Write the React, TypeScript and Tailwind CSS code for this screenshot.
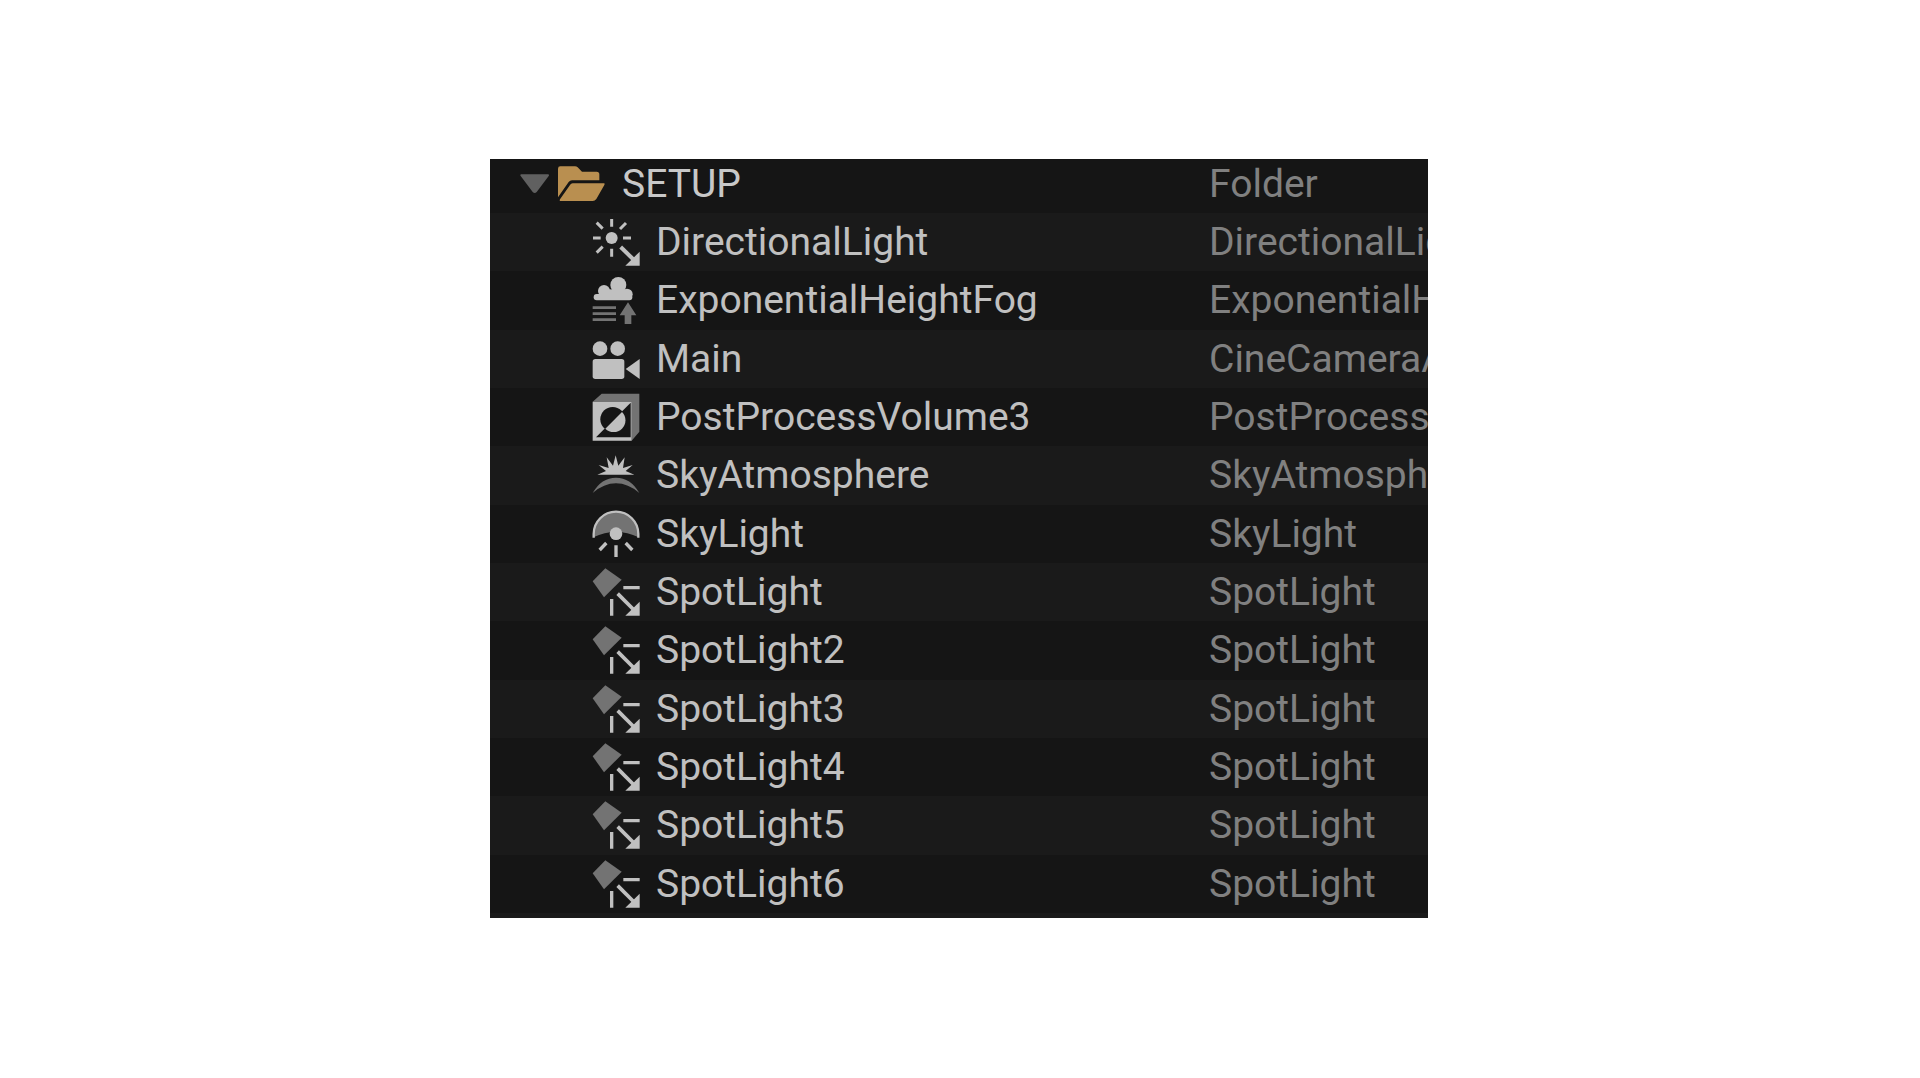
import { useState, type ReactNode } from "react";

const LIGHT = "#c0c0c0";
const DIM = "#737373";

function Icon({ children }: { children: ReactNode }) {
    return (
        <svg viewBox="0 0 144 144" className="size-12 shrink-0" fill={LIGHT} aria-hidden="true">
            {children}
        </svg>
    );
}

function DirectionalLightIcon() {
    return (
        <Icon>
            <circle cx="59" cy="60" r="18" />
            <path
                d="M59 3V26M59 92V116M3 60H26M93 60H117M14 14L32 32M102 15L84 33M14 104L32 86"
                stroke={LIGHT}
                strokeWidth="9"
            />
            <path d="M86 87L126 126" stroke={LIGHT} strokeWidth="12" />
            <path d="M143 101V143H100Z" />
        </Icon>
    );
}

function FogIcon() {
    return (
        <Icon>
            <circle cx="79" cy="27" r="24" />
            <circle cx="36" cy="45" r="18" />
            <circle cx="105" cy="55" r="17" />
            <rect x="5" y="54" width="116" height="19" rx="9" />
            <path d="M30 40H100V70H30Z" />
            <path d="M2 95H72M2 113H72M2 131H72" stroke={DIM} strokeWidth="8" />
            <path d="M108 79L133 118H118V144H98V118H83Z" fill={DIM} />
        </Icon>
    );
}

function CameraIcon() {
    return (
        <Icon>
            <circle cx="24" cy="41" r="22" />
            <circle cx="77" cy="41" r="22" />
            <rect x="2" y="72" width="95" height="60" rx="8" />
            <path d="M101 102L143 72V132Z" />
        </Icon>
    );
}

function PostProcessIcon() {
    return (
        <Icon>
            <path d="M2 26L29 2H142V116L119 143V26Z" fill={DIM} />
            <path d="M2 26H119V143H2Z" />
            <path d="M116 29V133H12Z" fill="#151515" />
            <circle cx="62" cy="79" r="37" fill="#151515" />
            <path d="M90 57A35 35 0 0 1 40 107Z" />
        </Icon>
    );
}

function SkyAtmosphereIcon() {
    return (
        <Icon>
            <path d="M16 71L42 60L20 42L50 51L44 19L63 44L71 13L79 44L98 19L93 51L122 42L101 60L127 71Z" />
            <path d="M2 126Q28 80 72 80Q116 80 142 126Q108 97 72 97Q36 97 2 126Z" fill={DIM} />
        </Icon>
    );
}

function SkyLightIcon() {
    return (
        <Icon>
            <path d="M4 82V72A68 67 0 0 1 140 72V82Q72 50 4 82Z" fill={DIM} />
            <path d="M5 83V72A67 67 0 0 1 139 72V83" fill="none" stroke={LIGHT} strokeWidth="7" />
            <circle cx="72" cy="71" r="19" />
            <path d="M72 106V141M43 99L23 120M101 99L121 120" stroke={LIGHT} strokeWidth="10" />
        </Icon>
    );
}

function SpotLightIcon() {
    return (
        <Icon>
            <path d="M40 1L89 35L36 88L2 40Z" fill={DIM} />
            <path d="M94 59H143M59 93V143" stroke={LIGHT} strokeWidth="10" />
            <path d="M77 77L126 126" stroke={LIGHT} strokeWidth="11" />
            <path d="M143 101V143H100Z" />
        </Icon>
    );
}

function FolderIcon() {
    return (
        <svg viewBox="0 0 144 108" className="h-9 w-12 shrink-0" fill="#b98f50" aria-hidden="true">
            <path d="M0 94V8Q0 1 7 1H51Q56 1 59 4L72 17H116Q124 17 124 25V43H42Q36 43 32 48Z" />
            <path d="M44 52H138Q142 52 139 57L115 99Q111 105 104 105H7Q3 105 6 100L36 57Q39 52 44 52Z" />
        </svg>
    );
}

const actors = [
    { name: "DirectionalLight", type: "DirectionalLight", icon: DirectionalLightIcon },
    { name: "ExponentialHeightFog", type: "ExponentialHeightFog", icon: FogIcon },
    { name: "Main", type: "CineCameraActor", icon: CameraIcon },
    { name: "PostProcessVolume3", type: "PostProcessVolume", icon: PostProcessIcon },
    { name: "SkyAtmosphere", type: "SkyAtmosphere", icon: SkyAtmosphereIcon },
    { name: "SkyLight", type: "SkyLight", icon: SkyLightIcon },
    { name: "SpotLight", type: "SpotLight", icon: SpotLightIcon },
    { name: "SpotLight2", type: "SpotLight", icon: SpotLightIcon },
    { name: "SpotLight3", type: "SpotLight", icon: SpotLightIcon },
    { name: "SpotLight4", type: "SpotLight", icon: SpotLightIcon },
    { name: "SpotLight5", type: "SpotLight", icon: SpotLightIcon },
    { name: "SpotLight6", type: "SpotLight", icon: SpotLightIcon },
];

export default function App() {
    const [open, setOpen] = useState(true);

    return (
        <main className="flex min-h-screen items-center justify-center bg-white pr-0.5 pb-0.5">
            <div className="w-full max-w-[938px] overflow-hidden bg-[#1a1a1a] pb-[5px] font-[Roboto,sans-serif] text-[39px] leading-[44px]">
                <table className="w-full table-fixed border-collapse whitespace-nowrap">
                    <colgroup>
                        <col />
                        <col className="w-[219px]" />
                    </colgroup>
                    <tbody>
                        {/* Folder row */}
                        <tr className="h-[54px] bg-[#151515] text-[#c8c8c8]">
                            <td className="p-0 pb-1 pl-[30px]">
                                <div className="flex items-center">
                                    <button
                                        type="button"
                                        aria-label="SETUP"
                                        aria-expanded={open}
                                        onClick={() => setOpen(!open)}
                                        className="mr-2 flex h-9 w-[30px] items-center"
                                    >
                                        <svg viewBox="0 0 90 60" className={open ? "h-5 w-[30px]" : "h-5 w-[30px] -rotate-90"}>
                                            <path d="M4 1H84Q89 1 86 6L50 54Q44 60 38 54L2 6Q-1 1 4 1Z" fill="#606060" />
                                        </svg>
                                    </button>
                                    <FolderIcon />
                                    <span className="ml-4">SETUP</span>
                                </div>
                            </td>
                            <td className="overflow-hidden p-0 pb-1 text-[#808080]">Folder</td>
                        </tr>

                        {/* Actors */}
                        {open &&
                            actors.map(({ name, type, icon: ActorIcon }) => (
                                <tr key={name} className="h-[58px] odd:bg-[#151515] even:bg-[#1a1a1a] nth-[3n]:h-[59px]">
                                    <td className="p-0 pl-[102px]">
                                        <div className="flex items-center gap-4 text-[#c0c0c0]">
                                            <ActorIcon />
                                            <span>{name}</span>
                                        </div>
                                    </td>
                                    <td className="overflow-hidden p-0 text-[#808080]">{type}</td>
                                </tr>
                            ))}
                    </tbody>
                </table>
            </div>
        </main>
    );
}
